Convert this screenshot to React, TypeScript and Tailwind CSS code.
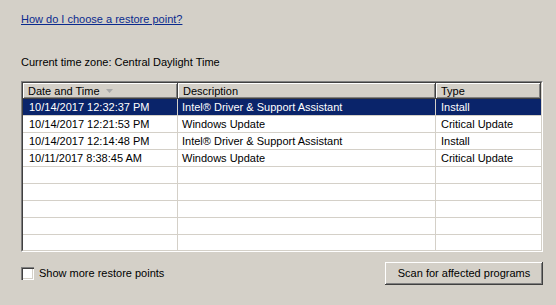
import React from "react";

const rows = [
  { date: "10/14/2017 12:32:37 PM", desc: "Intel® Driver & Support Assistant", type: "Install" },
  { date: "10/14/2017 12:21:53 PM", desc: "Windows Update", type: "Critical Update" },
  { date: "10/14/2017 12:14:48 PM", desc: "Intel® Driver & Support Assistant", type: "Install" },
  { date: "10/11/2017 8:38:45 AM", desc: "Windows Update", type: "Critical Update" },
];

const emptyRows = [0, 1, 2, 3, 4];

const headerCell =
  "h-[16px] flex items-center pl-[5px] bg-[#d4d0c8] shadow-[inset_-1px_-1px_0_#404040,inset_1px_1px_0_#ffffff,inset_-2px_-2px_0_#808080]";

const App: React.FC = () => {
  return (
    <div className="w-[556px] h-[305px] bg-[#d4d0c8] pl-[21px] pt-[13px] text-[11px] leading-[13px] text-black font-['Liberation_Sans',Arial,sans-serif] overflow-hidden">
      <a href="#" className="text-[#0a2a8e] underline">
        How do I choose a restore point?
      </a>

      <div className="mt-[30px]">Current time zone: Central Daylight Time</div>

      {/* list view */}
      <div className="mt-[12px] w-[522px] h-[171px] border border-t-[#808080] border-l-[#808080] border-b-white border-r-white">
        <div className="h-full border border-t-[#404040] border-l-[#404040] border-b-[#d4d0c8] border-r-[#d4d0c8] bg-white overflow-hidden">
          <div className="flex">
            <div className={`${headerCell} w-[155px]`}>
              Date and Time
              <svg width="7" height="4" viewBox="0 0 7 4" className="ml-[6px]">
                <polygon points="0,0 7,0 3.5,4" fill="#a8a8a8" />
              </svg>
            </div>
            <div className={`${headerCell} w-[258px]`}>Description</div>
            <div className={`${headerCell} w-[105px]`}>Type</div>
          </div>

          {rows.map((r, i) => (
            <div
              key={i}
              className={`flex h-[17px] border-b border-[#d4d0c8] ${i === 0 ? "bg-[#0a246a] text-white" : ""}`}
            >
              <div className="w-[155px] pl-[6px] pt-[2px] border-r border-[#d4d0c8]">{r.date}</div>
              <div className="w-[258px] pl-[4px] pt-[2px] border-r border-[#d4d0c8]">{r.desc}</div>
              <div className="w-[105px] pl-[5px] pt-[2px]">{r.type}</div>
            </div>
          ))}
          {emptyRows.map((i) => (
            <div key={i} className="flex h-[17px] border-b border-[#d4d0c8]">
              <div className="w-[155px] border-r border-[#d4d0c8]" />
              <div className="w-[258px] border-r border-[#d4d0c8]" />
              <div className="w-[105px]" />
            </div>
          ))}
        </div>
      </div>

      <div className="mt-[10px] w-[522px] flex items-center justify-between">
        <label className="flex items-center gap-[5px]">
          <span className="w-[13px] h-[13px] bg-white shadow-[inset_1px_1px_0_#808080,inset_2px_2px_0_#404040,inset_-1px_-1px_0_#ffffff,inset_-2px_-2px_0_#d4d0c8]" />
          Show more restore points
        </label>
        <button className="w-[158px] h-[23px] bg-[#d4d0c8] shadow-[inset_-1px_-1px_0_#404040,inset_1px_1px_0_#ffffff,inset_-2px_-2px_0_#808080] text-black">
          Scan for affected programs
        </button>
      </div>
    </div>
  );
};

export default App;
